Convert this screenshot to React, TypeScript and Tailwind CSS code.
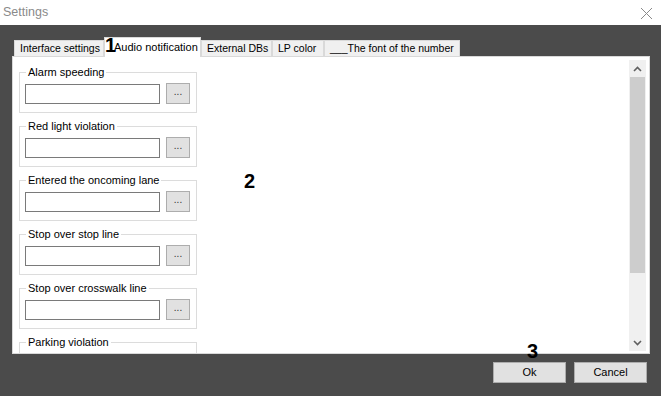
import { ReactNode } from "react";

const groups = [
  "Alarm speeding",
  "Red light violation",
  "Entered the oncoming lane",
  "Stop over stop line",
  "Stop over crosswalk line",
  "Parking violation",
];

type TabProps = { label: string; width: string; active?: boolean };

function Tab({ label, width, active }: TabProps) {
  if (active) {
    return (
      <div
        className={`${width} shrink-0 h-[20px] -mb-px relative z-10 bg-white border border-b-0 border-[#d9d9d9] flex items-center pl-[9px] text-[11px] text-black whitespace-nowrap`}
      >
        {label}
      </div>
    );
  }
  return (
    <div
      className={`${width} shrink-0 h-[16px] bg-[#f0f0f0] border border-b-0 border-[#d9d9d9] flex items-center pl-[5px] text-[10.5px] text-black whitespace-nowrap`}
    >
      {label}
    </div>
  );
}

function GroupBox({ title }: { title: string }) {
  return (
    <fieldset className="w-[178px] border border-[#dcdcdc] pl-[5px] pr-[6px] pt-[4px] pb-[8px]">
      <legend className="ml-[1px] px-[2px] text-[11px] leading-[13px] text-black">{title}</legend>
      <div className="flex gap-[6px] items-center">
        <div className="w-[135px] h-[20px] bg-white border border-[#7a7a7a]" />
        <button className="w-[24px] h-[21px] bg-[#e1e1e1] border border-[#adadad] text-[10px] leading-none text-[#333] pb-[4px]">
          ...
        </button>
      </div>
    </fieldset>
  );
}

function Btn({ children }: { children: ReactNode }) {
  return (
    <button className="w-[73px] h-[21px] bg-[#e1e1e1] border border-[#adadad] text-[11px] text-black">
      {children}
    </button>
  );
}

export default function App() {
  return (
    <div className="relative w-[661px] h-[396px] bg-[#4b4b4b] flex flex-col font-['Liberation_Sans',Arial,sans-serif] overflow-hidden">
      {/* ---- Title bar ---- */}
      <div className="h-[25px] bg-white flex items-center justify-between pl-[3px] pr-[8px]">
        <span className="text-[12.5px] text-[#8a8a8a]">Settings</span>
        <svg width="13" height="13" viewBox="0 0 13 13" className="mt-[1px]">
          <path d="M1 1 L12 12 M12 1 L1 12" stroke="#8a8a8a" strokeWidth="1" fill="none" />
        </svg>
      </div>

      {/* ---- Dialog body ---- */}
      <div className="flex-1 flex flex-col pl-[12px] pr-[11px] pt-[15px]">
        <div className="h-[16px] flex items-end pl-[2px]">
          <Tab label="Interface settings" width="w-[90px]" />
          <Tab label="Audio notification" width="w-[97px]" active />
          <Tab label="External DBs" width="w-[71px]" />
          <Tab label="LP color" width="w-[52px]" />
          <Tab label="___The font of the number" width="w-[136px]" />
        </div>

        <div className="h-[298px] bg-white border border-[#d9d9d9] flex overflow-hidden">
          <div className="flex-1 flex flex-col gap-[7px] pl-[6px] pt-[9px]">
            {groups.map((g) => (
              <GroupBox key={g} title={g} />
            ))}
          </div>

          {/* scrollbar */}
          <div className="w-[17px] mt-[3px] mb-[2px] mr-[3px] bg-[#f0f0f0] flex flex-col">
            <div className="h-[17px] flex items-center justify-center">
              <svg width="9" height="6" viewBox="0 0 9 6">
                <path d="M1 5 L4.5 1.5 L8 5" stroke="#606060" strokeWidth="1.6" fill="none" />
              </svg>
            </div>
            <div className="h-[196px] mx-[1px] bg-[#cdcdcd]" />
            <div className="flex-1" />
            <div className="h-[17px] flex items-center justify-center">
              <svg width="9" height="6" viewBox="0 0 9 6">
                <path d="M1 1 L4.5 4.5 L8 1" stroke="#606060" strokeWidth="1.6" fill="none" />
              </svg>
            </div>
          </div>
        </div>

        <div className="flex justify-end gap-[8px] mt-[8px] pr-[3px]">
          <Btn>Ok</Btn>
          <Btn>Cancel</Btn>
        </div>
      </div>

      {/* ---- Annotation markers ---- */}
      <span className="absolute left-[105px] top-[35px] text-[20px] font-bold text-black leading-none z-20">1</span>
      <span className="absolute left-[244px] top-[171px] text-[20px] font-bold text-black leading-none">2</span>
      <span className="absolute left-[527px] top-[341px] text-[20px] font-bold text-black leading-none">3</span>
    </div>
  );
}
